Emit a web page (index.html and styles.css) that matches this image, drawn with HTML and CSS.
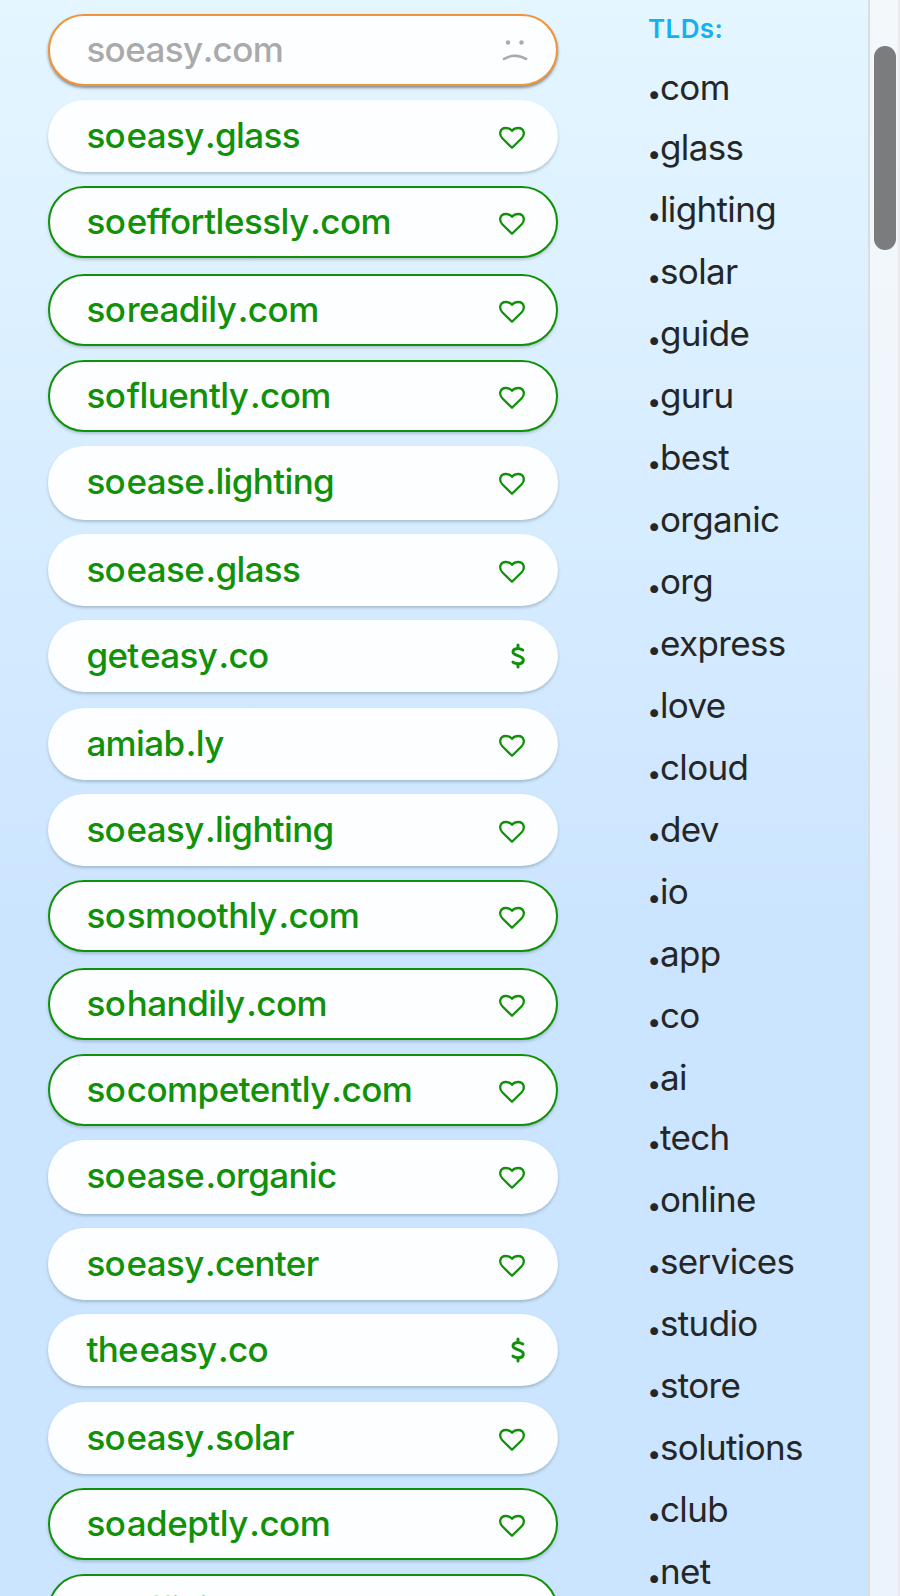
FILE: index.html
```html
<!DOCTYPE html>
<html lang="en">
<head>
<meta charset="utf-8">
<title>Domain search</title>
<link rel="stylesheet" href="styles.css">
</head>
<body>
<svg class="defs" width="0" height="0" aria-hidden="true">
  <symbol id="heart" viewBox="0 0 28 24"><path d="M14 21.800 4.300 12.200C.6 8.400 2 2 7.600 2 10.500 2 12.300 2.800 14 4.800 15.700 2.800 17.500 2 20.400 2 26 2 27.400 8.400 23.700 12.200Z" fill="none" stroke="currentColor" stroke-width="2.300" stroke-linejoin="round"/></symbol>
  <symbol id="sad" viewBox="0 0 28 24"><circle cx="7" cy="4.500" r="2.200" fill="currentColor"/><circle cx="20.500" cy="4.500" r="2.200" fill="currentColor"/><path d="M2 21.500Q14 14 26 21.500" fill="none" stroke="currentColor" stroke-width="2.400"/></symbol>
  <symbol id="dollar" viewBox="0 0 16 26"><path d="M8 2V5M8 21V24M12.800 7C9 5 3 4.800 3 9S13.300 12 13.300 17 6 21.200 3 19.200" fill="none" stroke="currentColor" stroke-width="3" stroke-linecap="round"/></symbol>
</svg>
<div class="page">
  <main class="results">
    <div class="pill taken"><p><span>so</span><span>easy</span><span>.com</span></p><svg class="sad"><use href="#sad"/></svg></div>
    <div class="pill"><p><span>so</span><span>easy</span><span>.glass</span></p><svg><use href="#heart"/></svg></div>
    <div class="pill outlined loose"><p><span>so</span><span>effortlessly</span><span>.com</span></p><svg><use href="#heart"/></svg></div>
    <div class="pill outlined"><p><span>so</span><span>readily</span><span>.com</span></p><svg><use href="#heart"/></svg></div>
    <div class="pill outlined"><p><span>so</span><span>fluently</span><span>.com</span></p><svg><use href="#heart"/></svg></div>
    <div class="pill tall"><p><span>so</span><span>ease</span><span>.lighting</span></p><svg><use href="#heart"/></svg></div>
    <div class="pill"><p><span>so</span><span>ease</span><span>.glass</span></p><svg><use href="#heart"/></svg></div>
    <div class="pill loose"><p><span>get</span><span>easy</span><span>.co</span></p><svg class="dollar"><use href="#dollar"/></svg></div>
    <div class="pill"><p><span>amiab</span><span>.ly</span></p><svg><use href="#heart"/></svg></div>
    <div class="pill"><p><span>so</span><span>easy</span><span>.lighting</span></p><svg><use href="#heart"/></svg></div>
    <div class="pill outlined loose"><p><span>so</span><span>smoothly</span><span>.com</span></p><svg><use href="#heart"/></svg></div>
    <div class="pill outlined"><p><span>so</span><span>handily</span><span>.com</span></p><svg><use href="#heart"/></svg></div>
    <div class="pill outlined"><p><span>so</span><span>competently</span><span>.com</span></p><svg><use href="#heart"/></svg></div>
    <div class="pill tall"><p><span>so</span><span>ease</span><span>.organic</span></p><svg><use href="#heart"/></svg></div>
    <div class="pill"><p><span>so</span><span>easy</span><span>.center</span></p><svg><use href="#heart"/></svg></div>
    <div class="pill loose"><p><span>the</span><span>easy</span><span>.co</span></p><svg class="dollar"><use href="#dollar"/></svg></div>
    <div class="pill"><p><span>so</span><span>easy</span><span>.solar</span></p><svg><use href="#heart"/></svg></div>
    <div class="pill outlined"><p><span>so</span><span>adeptly</span><span>.com</span></p><svg><use href="#heart"/></svg></div>
    <div class="pill outlined"><p><span>so</span><span>efficiently</span><span>.com</span></p><svg><use href="#heart"/></svg></div>
  </main>
  <aside class="tlds">
    <h2>TLDs:</h2>
    <ul>
      <li class="tight"><b>.</b>com</li>
      <li><b>.</b>glass</li>
      <li><b>.</b>lighting</li>
      <li><b>.</b>solar</li>
      <li><b>.</b>guide</li>
      <li><b>.</b>guru</li>
      <li><b>.</b>best</li>
      <li><b>.</b>organic</li>
      <li><b>.</b>org</li>
      <li><b>.</b>express</li>
      <li><b>.</b>love</li>
      <li><b>.</b>cloud</li>
      <li><b>.</b>dev</li>
      <li><b>.</b>io</li>
      <li><b>.</b>app</li>
      <li><b>.</b>co</li>
      <li class="tight"><b>.</b>ai</li>
      <li><b>.</b>tech</li>
      <li><b>.</b>online</li>
      <li><b>.</b>services</li>
      <li><b>.</b>studio</li>
      <li><b>.</b>store</li>
      <li><b>.</b>solutions</li>
      <li><b>.</b>club</li>
      <li><b>.</b>net</li>
    </ul>
  </aside>
  <div class="scrollbar"><div class="thumb"></div></div>
</div>
</body>
</html>
```
FILE: styles.css
```css
* { box-sizing: border-box; margin: 0; padding: 0; }
body { font-family: Inter, sans-serif; height: 1596px; overflow: hidden; }
.defs { display: block; height: 0; }
.page {
  display: flex;
  height: 1596px;
  overflow: hidden;
  background: linear-gradient(#e4f6ff 0, #cbe4ff 960px);
}
.results { width: 600px; padding: 14px 42px 0 48px; }
.pill {
  display: flex;
  align-items: center;
  justify-content: space-between;
  height: 72px;
  margin-bottom: 14px;
  padding: 0 32px 0 38.4px;
  border-radius: 36px;
  background: #fdfeff;
  color: #109108;
  box-shadow: 0 2px 3px rgba(70, 100, 110, .32);
}
.pill.loose { margin-bottom: 16px; }
.pill.tall { height: 74px; padding-bottom: 2px; }
.pill.outlined { border: 2px solid #109108; padding: 0 30px 0 36.4px; box-shadow: 0 2px 3px rgba(70, 90, 100, .28); }
.pill.taken { border: 2px solid #f19438; padding: 0 27px 0 36.4px; color: #aaa; box-shadow: 0 2px 3px rgba(40, 40, 50, .5); }
.pill p { padding-bottom: 2px; font-size: 35px; font-weight: 500; line-height: 44px; letter-spacing: -.65px; white-space: nowrap; }
.pill.outlined p { letter-spacing: -.52px; }
.pill span { display: inline-block; }
.pill span + span { margin-left: 1.4px; }
.pill.taken span + span { margin-left: .2px; }
.pill svg { width: 28px; height: 24px; margin-top: 4px; }
.pill svg.sad { margin-top: 0; }
.pill svg.dollar { width: 16px; height: 26px; margin-top: 0; }
.tlds { width: 268px; padding: 14px 0 0 48px; color: #262626; }
.tlds h2 { height: 43px; line-height: 29px; font-size: 26px; font-weight: 600; color: #14b0f0; letter-spacing: .4px; }
.tlds ul { list-style: none; }
.tlds li { height: 62px; line-height: 60px; font-size: 35px; letter-spacing: -.65px; white-space: nowrap; }
.tlds li.tight { height: 60px; }
.tlds b { display: inline-block; width: 12px; font-size: 46px; line-height: 40px; font-weight: 700; text-indent: -1.5px; vertical-align: 1px; }
.scrollbar {
  width: 32px;
  padding: 46px 0 0 4px;
  border-left: 2px solid #d9dddd;
  border-right: 2px solid #e8eaee;
  background: linear-gradient(#f3f8fb, #edf3fc 960px);
}
.thumb { width: 22px; height: 204px; border-radius: 11px; background: #7b7c7e; }
```
